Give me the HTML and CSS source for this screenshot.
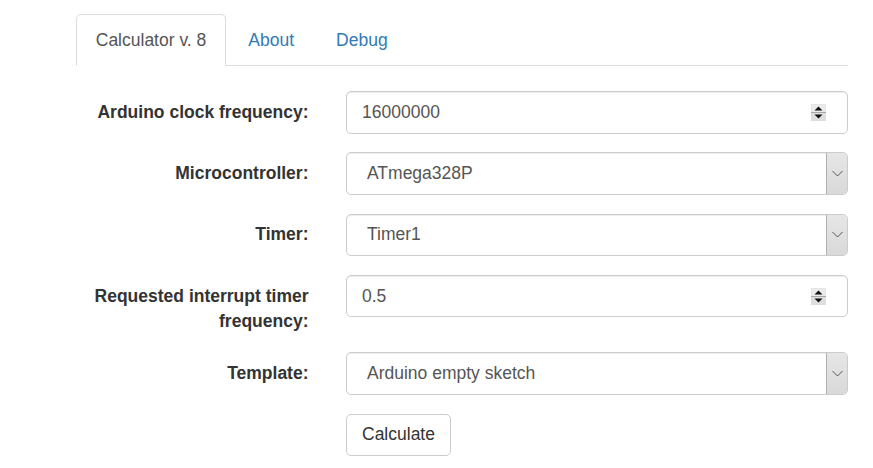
FILE: index.html
```html
<!DOCTYPE html>
<html>
<head>
<meta charset="utf-8">
<link rel="stylesheet" href="styles.css">
</head>
<body>
<div class="page">
  <ul class="tabs">
    <li class="tab active"><a>Calculator v. 8</a></li>
    <li class="tab"><a>About</a></li>
    <li class="tab"><a>Debug</a></li>
  </ul>
  <div class="tab-content">
    <div class="group">
      <div class="lbl">Arduino clock frequency:</div>
      <div class="field">
        <div class="input num"><span class="val">16000000</span>
          <svg class="spin" width="15" height="17" viewBox="0 0 15 17"><rect x="0" y="0" width="15" height="17" fill="#dedede"/><rect x="0.5" y="0.5" width="14" height="7.5" fill="#ebebeb"/><line x1="0" y1="8.5" x2="15" y2="8.5" stroke="#a8a8a8" stroke-width="1"/><polygon points="3.5,6.5 7.5,2.5 11.5,6.5" fill="#111"/><polygon points="3.5,10.5 11.5,10.5 7.5,14.5" fill="#111"/></svg>
        </div>
      </div>
    </div>
    <div class="group">
      <div class="lbl">Microcontroller:</div>
      <div class="field">
        <div class="input sel"><span class="val">ATmega328P</span><span class="arrow"><svg width="11" height="7" viewBox="0 0 11 7"><polyline points="0.5,1 5.5,6 10.5,1" fill="none" stroke="#555" stroke-width="1"/></svg></span></div>
      </div>
    </div>
    <div class="group">
      <div class="lbl">Timer:</div>
      <div class="field">
        <div class="input sel"><span class="val">Timer1</span><span class="arrow"><svg width="11" height="7" viewBox="0 0 11 7"><polyline points="0.5,1 5.5,6 10.5,1" fill="none" stroke="#555" stroke-width="1"/></svg></span></div>
      </div>
    </div>
    <div class="group">
      <div class="lbl">Requested interrupt timer frequency:</div>
      <div class="field">
        <div class="input num"><span class="val">0.5</span>
          <svg class="spin" width="15" height="17" viewBox="0 0 15 17"><rect x="0" y="0" width="15" height="17" fill="#dedede"/><rect x="0.5" y="0.5" width="14" height="7.5" fill="#ebebeb"/><line x1="0" y1="8.5" x2="15" y2="8.5" stroke="#a8a8a8" stroke-width="1"/><polygon points="3.5,6.5 7.5,2.5 11.5,6.5" fill="#111"/><polygon points="3.5,10.5 11.5,10.5 7.5,14.5" fill="#111"/></svg>
        </div>
      </div>
    </div>
    <div class="group">
      <div class="lbl">Template:</div>
      <div class="field">
        <div class="input sel"><span class="val">Arduino empty sketch</span><span class="arrow"><svg width="11" height="7" viewBox="0 0 11 7"><polyline points="0.5,1 5.5,6 10.5,1" fill="none" stroke="#555" stroke-width="1"/></svg></span></div>
      </div>
    </div>
    <div class="group">
      <div class="lbl"></div>
      <div class="field">
        <button class="btn">Calculate</button>
      </div>
    </div>
  </div>
</div>
</body>
</html>
```
FILE: styles.css
```css
html, body {
  margin: 0;
  padding: 0;
  background: #fff;
}
body {
  font-family: "Liberation Sans", Arial, sans-serif;
  font-size: 17.5px;
  line-height: 25px;
  color: #333;
}
.page {
  margin-left: 76px;
  width: 772px;
  padding-top: 14px;
}
.tabs {
  list-style: none;
  margin: 0;
  padding: 0;
  display: flex;
  border-bottom: 1px solid #ddd;
}
.tab {
  margin-bottom: -1px;
}
.tab a {
  display: block;
  padding: 12.5px 18.75px;
  margin-right: 2.5px;
  border: 1px solid transparent;
  border-radius: 5px 5px 0 0;
  color: #337ab7;
  line-height: 25px;
}
.tab.active a {
  color: #555;
  background: #fff;
  border-color: #ddd;
  border-bottom-color: transparent;
}
.tab-content {
  padding-top: 25px;
}
.group {
  display: flex;
  gap: 37.5px;
  margin-bottom: 18.75px;
}
.lbl {
  width: 232.5px;
  flex: none;
  text-align: right;
  font-weight: bold;
  padding-top: 8.75px;
  line-height: 25px;
  color: #333;
}
.field {
  width: 502px;
  flex: none;
}
.input {
  box-sizing: border-box;
  height: 42.5px;
  border: 1px solid #ccc;
  border-radius: 5px;
  padding: 7.5px 15px;
  color: #555;
  display: flex;
  align-items: center;
  box-shadow: inset 0 1px 1px rgba(0,0,0,.075);
  background: #fff;
}
.val {
  flex: 1;
}
.spin {
  display: block;
  margin-right: 6px;
}
.sel {
  padding: 0 0 0 20px;
  overflow: hidden;
}
.arrow {
  align-self: stretch;
  width: 21px;
  box-sizing: border-box;
  background: linear-gradient(#e6e6e6, #d9d9d9);
  border-left: 1px solid #b0b0b0;
  border-radius: 0 4px 4px 0;
  display: flex;
  align-items: center;
  justify-content: center;
}
.btn {
  box-sizing: border-box;
  height: 42.5px;
  font-family: "Liberation Sans", Arial, sans-serif;
  font-size: 17.5px;
  line-height: 25px;
  color: #333;
  background: #fff;
  border: 1px solid #ccc;
  border-radius: 5px;
  padding: 7.5px 15px;
}
```
